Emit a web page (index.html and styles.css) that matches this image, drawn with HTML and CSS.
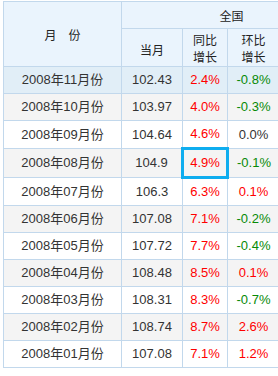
FILE: index.html
```html
<!DOCTYPE html>
<html lang="zh-CN">
<head>
  <meta charset="UTF-8">
  <meta name="viewport" content="width=device-width, initial-scale=1.0">
  <title>居民消费价格指数</title>
  <link rel="stylesheet" href="styles.css">
</head>
<body>
  <div class="wrap">
    <table class="cpi">
      <colgroup>
        <col class="c-month">
        <col class="c-now">
        <col class="c-yoy">
        <col class="c-mom">
        <col class="c-more">
      </colgroup>
      <thead>
        <tr class="h-row1">
          <th rowspan="2" class="h-month">月　份</th>
          <th colspan="4">全国</th>
        </tr>
        <tr class="h-row2">
          <th>当月</th>
          <th>同比<br>增长</th>
          <th>环比<br>增长</th>
          <th></th>
        </tr>
      </thead>
      <tbody>
        <tr class="hover">
          <td>2008年11月份</td><td>102.43</td><td class="up">2.4%</td><td class="down">-0.8%</td><td></td>
        </tr>
        <tr class="odd">
          <td>2008年10月份</td><td>103.97</td><td class="up">4.0%</td><td class="down">-0.3%</td><td></td>
        </tr>
        <tr>
          <td>2008年09月份</td><td>104.64</td><td class="up">4.6%</td><td>0.0%</td><td></td>
        </tr>
        <tr class="odd">
          <td>2008年08月份</td><td>104.9</td><td class="up picked">4.9%</td><td class="down">-0.1%</td><td></td>
        </tr>
        <tr>
          <td>2008年07月份</td><td>106.3</td><td class="up">6.3%</td><td class="up">0.1%</td><td></td>
        </tr>
        <tr class="odd">
          <td>2008年06月份</td><td>107.08</td><td class="up">7.1%</td><td class="down">-0.2%</td><td></td>
        </tr>
        <tr>
          <td>2008年05月份</td><td>107.72</td><td class="up">7.7%</td><td class="down">-0.4%</td><td></td>
        </tr>
        <tr class="odd">
          <td>2008年04月份</td><td>108.48</td><td class="up">8.5%</td><td class="up">0.1%</td><td></td>
        </tr>
        <tr>
          <td>2008年03月份</td><td>108.31</td><td class="up">8.3%</td><td class="down">-0.7%</td><td></td>
        </tr>
        <tr class="odd">
          <td>2008年02月份</td><td>108.74</td><td class="up">8.7%</td><td class="up">2.6%</td><td></td>
        </tr>
        <tr>
          <td>2008年01月份</td><td>107.08</td><td class="up">7.1%</td><td class="up">1.2%</td><td></td>
        </tr>
      </tbody>
    </table>
  </div>
</body>
</html>
```

FILE: styles.css
```css
body {
  margin: 0;
  background-color: #fff;
  font-family: "Liberation Sans", Arial, "Noto Sans CJK SC", sans-serif;
  color: #333;
  overflow: hidden;
}

.wrap {
  padding: 1px 0 0 3px;
  width: 275px;
  overflow: hidden;
}

.cpi {
  border-collapse: collapse;
  table-layout: fixed;
  width: 338px;
  font-size: 13px;
}

.c-month { width: 118px; }
.c-now { width: 61px; }
.c-yoy { width: 45px; }
.c-mom { width: 52px; }
.c-more { width: 62px; }

.cpi th,
.cpi td {
  border: 1px solid #c2d8ec;
  text-align: center;
  padding: 0;
  overflow: hidden;
}

/* header */
.cpi th {
  background-color: #eaf4fd;
  font-family: "Noto Sans CJK SC", sans-serif;
  font-weight: normal;
  font-size: 12px;
  line-height: 17px;
  color: #222;
}

.h-row1 th {
  height: 26px;
}

.h-row2 th {
  height: 33px;
}

.h-row2 th:first-child {
  padding-top: 4px;
}

.h-month {
  font-size: 13px;
}

/* body rows */
.cpi td {
  height: 26px;
  line-height: 16px;
}

.cpi tr.odd td {
  background-color: #f4f4f4;
}

.cpi tr.hover td {
  background-color: #e1eef7;
}

.up { color: #ff0000; }
.down { color: #078a07; }

.cpi td.picked {
  border: 3px solid #0eadef;
}
```
